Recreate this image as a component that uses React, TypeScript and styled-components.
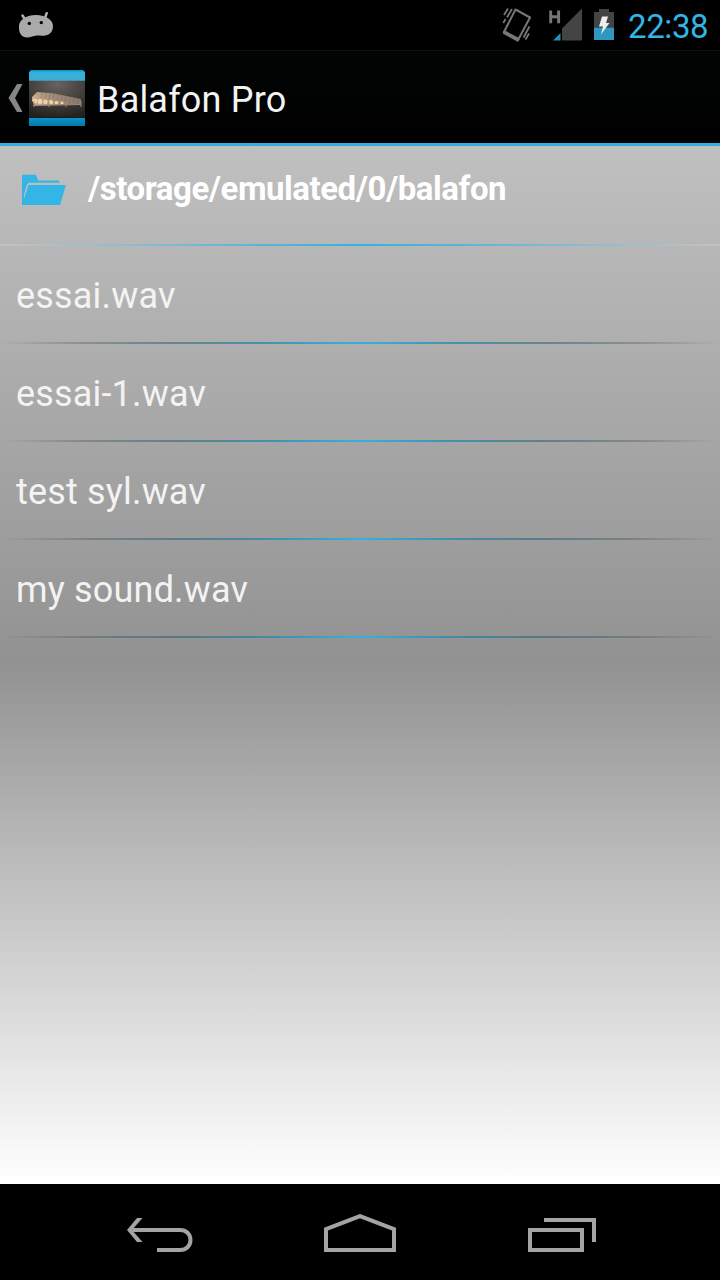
import React from "react";
import styled, { createGlobalStyle } from "styled-components";

const GlobalStyle = createGlobalStyle`
  html, body { margin: 0; padding: 0; background: #000; }
  *, *::before, *::after { box-sizing: border-box; }
  svg { display: block; flex: none; }
`;

const Screen = styled.div`
  width: 720px;
  height: 1280px;
  display: flex;
  flex-direction: column;
  overflow: hidden;
  background: #000;
  font-family: Roboto, "Liberation Sans", sans-serif;
`;

const StatusBar = styled.header`
  height: 50px;
  display: flex;
  align-items: center;
  padding: 0 12px 0 17px;
`;

const StatusIcons = styled.div`
  display: flex;
  align-items: center;
  margin-left: auto;
`;

const SignalSlot = styled.div`
  margin: 0 12px 0 15px;
`;

const Clock = styled.time`
  width: 80px;
  margin-left: 14px;
  padding-top: 3px;
  color: #33b5e5;
  font-size: 33px;
  letter-spacing: -0.4px;
  line-height: 47px;
  white-space: nowrap;
`;

const ActionBar = styled.div`
  height: 96px;
  display: flex;
  align-items: center;
  padding-left: 8px;
  padding-top: 1px;
  border-top: 1px solid #111;
  border-bottom: 3px solid #33afdf;
  background: linear-gradient(#020404, #000);
`;

const AppIcon = styled.div`
  margin-left: 6px;
  margin-right: 12px;
`;

const Title = styled.h1`
  margin: 0;
  padding-top: 4px;
  color: #f3f3f3;
  font-size: 36px;
  font-weight: 400;
  letter-spacing: 0.2px;
  line-height: 44px;
  white-space: nowrap;
`;

const Content = styled.main`
  height: 1038px;
  display: flex;
  flex-direction: column;
  background: linear-gradient(#c0c0c0 0%, #929292 50%, #ffffff 100%);
`;

const PathRow = styled.div`
  height: 98px;
  display: flex;
  align-items: flex-start;
  padding: 28px 0 0 22px;
`;

const PathText = styled.h2`
  margin: -5px 0 0 22px;
  color: #fff;
  font-size: 33px;
  font-weight: 700;
  letter-spacing: -0.46px;
  line-height: 40px;
  white-space: nowrap;
`;

const Divider = styled.div<{ $edge: string; $quarter: string; $mid: string; $near: string }>`
  height: 2px;
  flex: none;
  background: linear-gradient(
    90deg,
    ${(p) => p.$edge},
    ${(p) => p.$quarter} 12.5%,
    ${(p) => p.$mid} 25%,
    ${(p) => p.$near} 37.5%,
    #33b1e1 50%,
    ${(p) => p.$near} 62.5%,
    ${(p) => p.$mid} 75%,
    ${(p) => p.$quarter} 87.5%,
    ${(p) => p.$edge}
  );
`;

const FileList = styled.ul`
  margin: 0;
  padding: 0;
  list-style: none;
`;

const FileRow = styled.li`
  height: 98px;
  display: flex;
  flex-direction: column;
`;

const FileName = styled.span`
  height: 96px;
  padding: 4px 0 0 16px;
  color: #f3f3f3;
  font-size: 36px;
  letter-spacing: 0.18px;
  line-height: 92px;
  white-space: nowrap;
`;

const NavBar = styled.nav`
  height: 96px;
  display: flex;
  align-items: flex-start;
  padding: 30px 0 0 127px;
`;

const NavButton = styled.div<{ $gap?: number }>`
  margin-right: ${(p) => p.$gap ?? 0}px;
`;

const files = ["essai.wav", "essai-1.wav", "test syl.wav", "my sound.wav"];

const DroidIcon = () => (
  <svg width="38" height="30" viewBox="17 10 38 30">
    <path d="M22.500 15.500l2.500 4M46.700 13.200l-1.700 4.500" stroke="#b0b0b0" strokeWidth="2.500" strokeLinecap="round" />
    <path d="M19 28C18 21 25 15 36 15c10 0 17 5 17 11 0 6-4 9.500-8 9.500-3 .5-5 0-8 0-4 .3-6 2-10 2-5 0-8-4-8-9.500z" fill="#aaa" />
    <circle cx="29.300" cy="23.400" r="1.700" fill="#000" />
    <circle cx="41.300" cy="22.600" r="1.700" fill="#000" />
  </svg>
);

const VibrateIcon = () => (
  <svg width="32" height="36" viewBox="501 7 32 36" fill="none" stroke="#777">
    <path d="M515.500 9.500l14.500 8-12 22.500-14-8z" strokeWidth="2" strokeLinejoin="round" />
    <path d="M504.500 31.500l14 7.500-.8 1.500-13.800-7.500z" fill="#777" strokeWidth="2.200" strokeLinejoin="round" />
    <path d="M512 9l-5 8.500M508 8.500l-4 6.500M505.500 19l-2.200 4M529.500 26.500l-6 11M529 33.500l-3.500 6" strokeWidth="1.800" />
  </svg>
);

const SignalIcon = () => (
  <svg width="34" height="34" viewBox="548 8 34 34">
    <path d="M550.700 10.500V23.200M558.600 10.500V23.200M550.700 16.800h8" stroke="#777" strokeWidth="2.900" fill="none" />
    <path d="M562 28.500L582 8.500V40.500H562z" fill="#444" />
    <path d="M553 40.500l7.500-7.500v7.500z" fill="#278fb8" />
  </svg>
);

const BatteryIcon = () => (
  <svg width="20" height="32" viewBox="594 9 20 32">
    <path d="M599 9h10v3h5v15.500h-20V12h5z" fill="#444" />
    <path d="M594 27.500h20V40h-20z" fill="#3097bf" />
    <path d="M602 16.500h6l-2 6.500h3.500L601 34.500l2-8h-4z" fill="#eee" />
  </svg>
);

const UpIcon = () => (
  <svg width="15" height="30" viewBox="8 83 15 30">
    <path d="M17 84h5.500l-7.500 14 7.500 14H17L8.500 98z" fill="#868686" />
  </svg>
);

const BalafonIcon = () => (
  <svg width="56" height="56" viewBox="0 0 56 56">
    <defs>
      <linearGradient id="top" x2="0" y2="1">
        <stop stopColor="#168dbb" />
        <stop offset=".25" stopColor="#32b3df" />
        <stop offset="1" stopColor="#42a9d0" />
      </linearGradient>
      <linearGradient id="bottom" x2="0" y2="1">
        <stop stopColor="#0794c9" />
        <stop offset="1" stopColor="#0478a7" />
      </linearGradient>
      <radialGradient id="photo" cx=".5" cy=".1" r=".9">
        <stop stopColor="#68635f" />
        <stop offset="1" stopColor="#242220" />
      </radialGradient>
      <linearGradient id="wood">
        <stop stopColor="#c9ab8f" />
        <stop offset=".4" stopColor="#a68e7a" />
        <stop offset="1" stopColor="#85776d" />
      </linearGradient>
    </defs>
    <path d="M2 0h52l2 2v9H0V2z" fill="url(#top)" />
    <path d="M0 10.800h56v37H0z" fill="url(#photo)" />
    <path d="M0 48h56v8H0z" fill="url(#bottom)" />
    <path d="M3 27l5-5 17 1.500 15 3 12 2.500v5l-12 .5-14 .5-20 .5-3-5z" fill="url(#wood)" />
    <path d="M13 23l-1 5M17 23.500l-1 5M21 24l-1 5M25 24l-1 5M29 25l-1 5M33 26l-1 5M37 26.500l-1 5M41 27.500l-1 5M45 28.500l-1 4M49 29.500l-1 4" stroke="#75665b" strokeWidth=".5" />
    <g fill="#f3d0a8">
      <circle cx="6" cy="31" r="2.400" />
      <ellipse cx="11" cy="31.500" rx="2.400" ry="2.700" />
      <ellipse cx="16.500" cy="32" rx="2.200" ry="2.400" />
      <ellipse cx="22" cy="32.300" rx="2.200" ry="2.200" />
      <ellipse cx="27.500" cy="32.700" rx="2" ry="1.800" />
      <ellipse cx="33" cy="33" rx="1.600" ry="1.400" />
    </g>
    <path d="M4 35.500l48-1M5 31v6M20 32v5M37 32v5M52 31v6" stroke="#a58d79" strokeWidth="1" />
  </svg>
);

const FolderIcon = () => (
  <svg width="44" height="32" viewBox="22 174 44 32">
    <path d="M22 175.500q0-.700.800-.700H35q1 0 1.400 1l1.800 4.700H59l.500 2.300H28l-3 11.500h-1V205h-2z" fill="#33b5e5" />
    <path d="M28.500 185H65q.800 0 .600.800l-5.300 18.400q-.300.900-1.200.900H22z" fill="#33b5e5" />
    <path d="M24.700 194l2.800-9.800" stroke="#b9c7cd" strokeWidth="1" />
  </svg>
);

const BackIcon = () => (
  <svg width="67" height="40" viewBox="127 1214 67 40" fill="none" stroke="#a4a4a4" strokeWidth="4">
    <path d="M131 1230h49c6 0 10.500 4 10.500 10s-4.500 10-10.500 10h-23" />
    <path d="M137 1218h5.500l-10.500 12 10.500 12H137l-10-12z" fill="#a4a4a4" stroke="none" />
  </svg>
);

const HomeIcon = () => (
  <svg width="72" height="38" viewBox="324 1214 72 38" fill="none" stroke="#a4a4a4" strokeWidth="4">
    <path d="M326 1229.200l34-13.100 34 13.100V1250h-68z" />
  </svg>
);

const RecentsIcon = () => (
  <svg width="68" height="38" viewBox="528 1214 68 38" fill="none" stroke="#a4a4a4" strokeWidth="4">
    <path d="M530 1230h52v20h-52zM544 1220h50v22" />
  </svg>
);

export default function App() {
  return (
    <>
      <GlobalStyle />
      <Screen>
        <StatusBar>
          <DroidIcon />
          <StatusIcons>
            <VibrateIcon />
            <SignalSlot>
              <SignalIcon />
            </SignalSlot>
            <BatteryIcon />
            <Clock>22:38</Clock>
          </StatusIcons>
        </StatusBar>
        <ActionBar>
          <UpIcon />
          <AppIcon>
            <BalafonIcon />
          </AppIcon>
          <Title>Balafon Pro</Title>
        </ActionBar>
        <Content>
          <PathRow>
            <FolderIcon />
            <PathText>/storage/emulated/0/balafon</PathText>
          </PathRow>
          <Divider $edge="#c2c2c2" $quarter="#a0bdc9" $mid="#7cb8d0" $near="#58b3d8" />
          <FileList>
            {files.map((name) => (
              <FileRow key={name}>
                <FileName>{name}</FileName>
                <Divider
                  $edge="rgba(0, 0, 0, 0)"
                  $quarter="rgba(13, 45, 57, 0.25)"
                  $mid="rgba(26, 90, 114, 0.5)"
                  $near="rgba(38, 136, 172, 0.75)"
                />
              </FileRow>
            ))}
          </FileList>
        </Content>
        <NavBar>
          <NavButton $gap={130}>
            <BackIcon />
          </NavButton>
          <NavButton $gap={132}>
            <HomeIcon />
          </NavButton>
          <NavButton>
            <RecentsIcon />
          </NavButton>
        </NavBar>
      </Screen>
    </>
  );
}
